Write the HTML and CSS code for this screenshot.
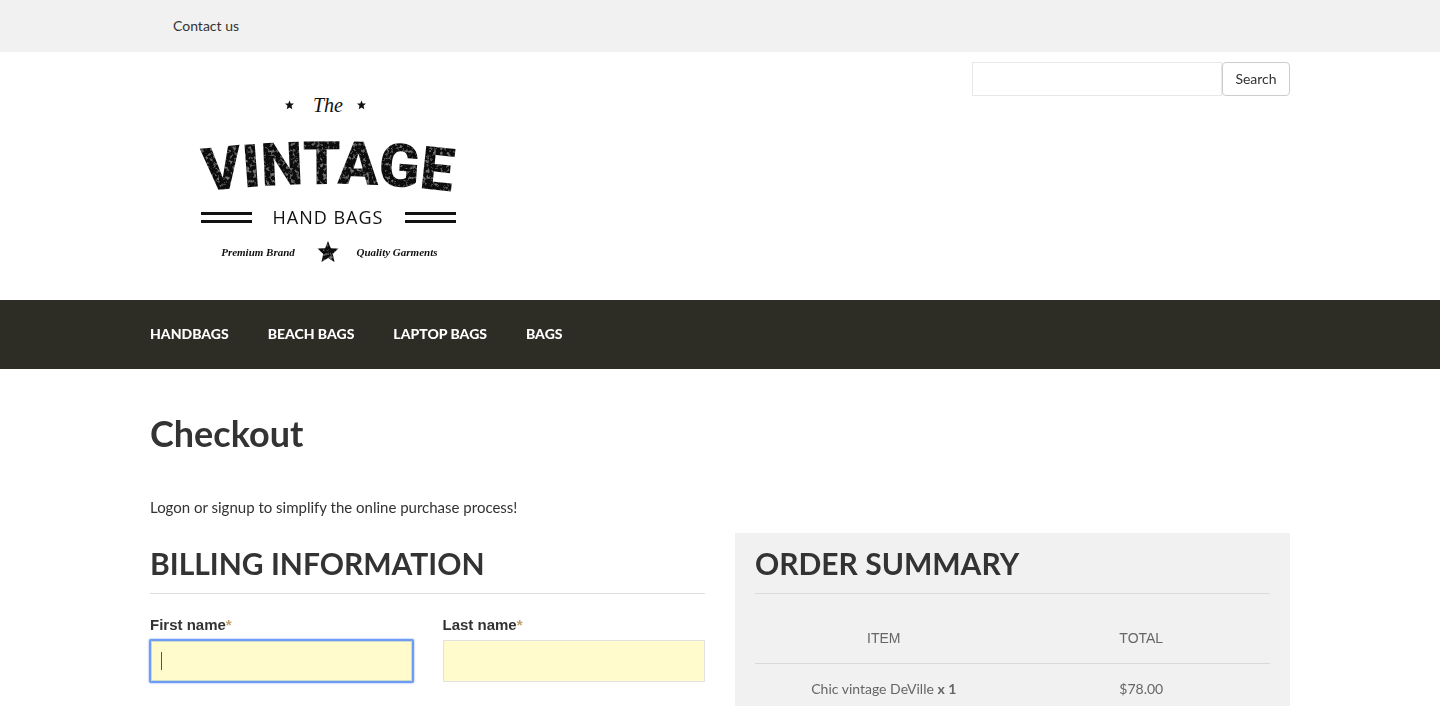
FILE: index.html
```html
<!DOCTYPE html>
<html lang="en">
<head>
<meta charset="utf-8">
<meta name="viewport" content="width=device-width, initial-scale=1">
<title>Checkout</title>
<link rel="stylesheet" href="styles.css">
</head>
<body>
<div class="topbar">
  <div class="container"><a class="topbar-link" href="#">Contact us</a></div>
</div>
<header class="container header">
  <a class="logo" href="#" aria-label="The Vintage Hand Bags">
    <svg width="280" height="180" viewBox="190 90 280 180">
      <defs>
        <path id="arch" d="M193 193Q328 175 463 193"/>
        <path id="star" d="M0-11 2.9-3.800 10.500-3.500 4.800 2 6.500 10 0 6-6.500 10-4.800 2-10.500-3.500-2.900-3.800Z"/>
        <filter id="worn" x="0" y="0" width="1" height="1">
          <feTurbulence type="fractalNoise" baseFrequency="0.3" numOctaves="3" seed="4" result="noise"/>
          <feColorMatrix in="noise" values="0 0 0 0 0.4  0 0 0 0 0.4  0 0 0 0 0.4  3 0 0 0 -1.6" result="specks"/>
          <feComposite in="specks" in2="SourceAlpha" operator="in" result="wear"/>
          <feComponentTransfer in="wear" result="soft"><feFuncA type="linear" slope="0.6"/></feComponentTransfer>
          <feMerge><feMergeNode in="SourceGraphic"/><feMergeNode in="soft"/></feMerge>
        </filter>
      </defs>
      <text class="logo-script logo-the" x="328" y="112">The</text>
      <use href="#star" transform="translate(289.500 105) scale(.42)"/>
      <use href="#star" transform="translate(361.500 105) scale(.42)"/>
      <g filter="url(#worn)">
        <text class="logo-name"><textPath href="#arch" startOffset="50%">VINTAGE</textPath></text>
        <use href="#star" transform="translate(328 252)"/>
      </g>
      <path d="M201 212h51v3h-51zM201 220h51v3h-51zM405 212h51v3h-51zM405 220h51v3h-51z"/>
      <text class="logo-sub" x="328" y="224">HAND BAGS</text>
      <text class="logo-script logo-tag" x="258" y="256">Premium Brand</text>
      <text class="logo-script logo-tag" x="397" y="256">Quality Garments</text>
    </svg>
  </a>
  <form class="search">
    <input class="search-input" type="text" aria-label="Search products">
    <button class="search-button" type="button">Search</button>
  </form>
</header>
<nav class="nav">
  <div class="container nav-list">
    <a href="#">HANDBAGS</a><a href="#">BEACH BAGS</a><a href="#">LAPTOP BAGS</a><a href="#">BAGS</a>
  </div>
</nav>
<main class="container">
  <h1 class="page-title">Checkout</h1>
  <p class="intro">Logon or signup to simplify the online purchase process!</p>
  <div class="columns">
    <section class="billing">
      <h2 class="section-title">BILLING INFORMATION</h2>
      <form class="fields">
        <div class="field field-focused">
          <label for="first-name">First name<span class="required">*</span></label>
          <div class="field-box"><input id="first-name" type="text"></div>
        </div>
        <div class="field">
          <label for="last-name">Last name<span class="required">*</span></label>
          <div class="field-box"><input id="last-name" type="text"></div>
        </div>
      </form>
    </section>
    <section class="summary">
      <h2 class="section-title">ORDER SUMMARY</h2>
      <table class="order">
        <thead><tr><th>ITEM</th><th>TOTAL</th></tr></thead>
        <tbody><tr><td>Chic vintage DeVille <strong>x 1</strong></td><td>$78.00</td></tr></tbody>
      </table>
    </section>
  </div>
</main>
</body>
</html>
```
FILE: styles.css
```css
* { box-sizing: border-box; }
body {
  margin: 0;
  background: #fff;
  color: #333;
  font-family: Lato, sans-serif;
  font-size: 15px;
  line-height: 22px;
}
a { color: inherit; text-decoration: none; }
.container { width: 100%; max-width: 1140px; margin: 0 auto; }
.topbar { background: #f1f1f1; padding: 15px 0; }
.topbar-link { display: block; padding-left: 23px; font-size: 14px; }
.header {
  display: flex;
  justify-content: space-between;
  align-items: flex-start;
  padding: 10px 0 30px;
}
.logo { padding: 28px 0 0 40px; }
.logo svg { display: block; fill: #111; }
.logo text { text-anchor: middle; }
.logo-name { font: 900 60px Roboto, sans-serif; }
.logo-sub { font: 18px "Open Sans", sans-serif; letter-spacing: 1px; }
.logo-script { font-family: "Liberation Serif", serif; font-style: italic; font-weight: bold; }
.logo-the { font-size: 20px; font-weight: normal; }
.logo-tag { font-size: 11px; }
.search { display: flex; }
.search-input { width: 250px; height: 34px; border: 1px solid #e8e8e8; padding: 6px 10px; font: inherit; }
.search-button {
  width: 68px;
  height: 34px;
  padding: 0 0 2px;
  border: 1px solid #ccc;
  border-radius: 4px;
  background: #fff;
  color: #333;
  font: 14px Lato, sans-serif;
}
.nav { background: #2d2c25; color: #fff; }
.nav-list { display: flex; gap: 39px; padding: 23px 0 24px; font-size: 14px; font-weight: 900; }
.page-title { margin: 0; padding-top: 41px; font-size: 36px; line-height: 46px; }
.intro { margin: 40px 0 15px; }
.columns { display: grid; grid-template-columns: 1fr 1fr; gap: 30px; }
.section-title {
  margin: 0;
  padding: 10px 0;
  border-bottom: 1px solid #ddd;
  font-size: 30px;
  line-height: 40px;
}
.summary { padding: 0 20px 20px; background: #f1f1f1; }
.fields { display: grid; grid-template-columns: 1fr 1fr; gap: 30px; padding-top: 20px; }
.field label { display: block; font: bold 15px/22px "Liberation Sans", sans-serif; }
.required { color: #c2a26a; }
.field-box { position: relative; margin-top: 4px; }
.field-box input {
  display: block;
  width: 100%;
  height: 42px;
  padding: 8px 10px;
  border: 1px solid #e2e2e2;
  border-radius: 0;
  background: #fffbcc;
  font: inherit;
}
.field-focused input { border-color: #6e9bf5; box-shadow: 0 0 0 1px #6e9bf5, 0 0 2px 1px #6e9bf5, inset 0 0 0 1px #cddcc8; border-radius: 1px; }
.field-focused .field-box::after {
  content: "";
  position: absolute;
  left: 11px;
  top: 12px;
  width: 1px;
  height: 18px;
  background: #555;
}
.order { width: 100%; margin-top: 19px; border-collapse: collapse; color: #666; font-size: 14px; text-align: center; table-layout: fixed; }
.order th { padding: 14px 0; border-bottom: 1px solid #d8d8d8; font: 14px/22px "Liberation Sans", sans-serif; }
.order td { padding: 14px 0; }
```
